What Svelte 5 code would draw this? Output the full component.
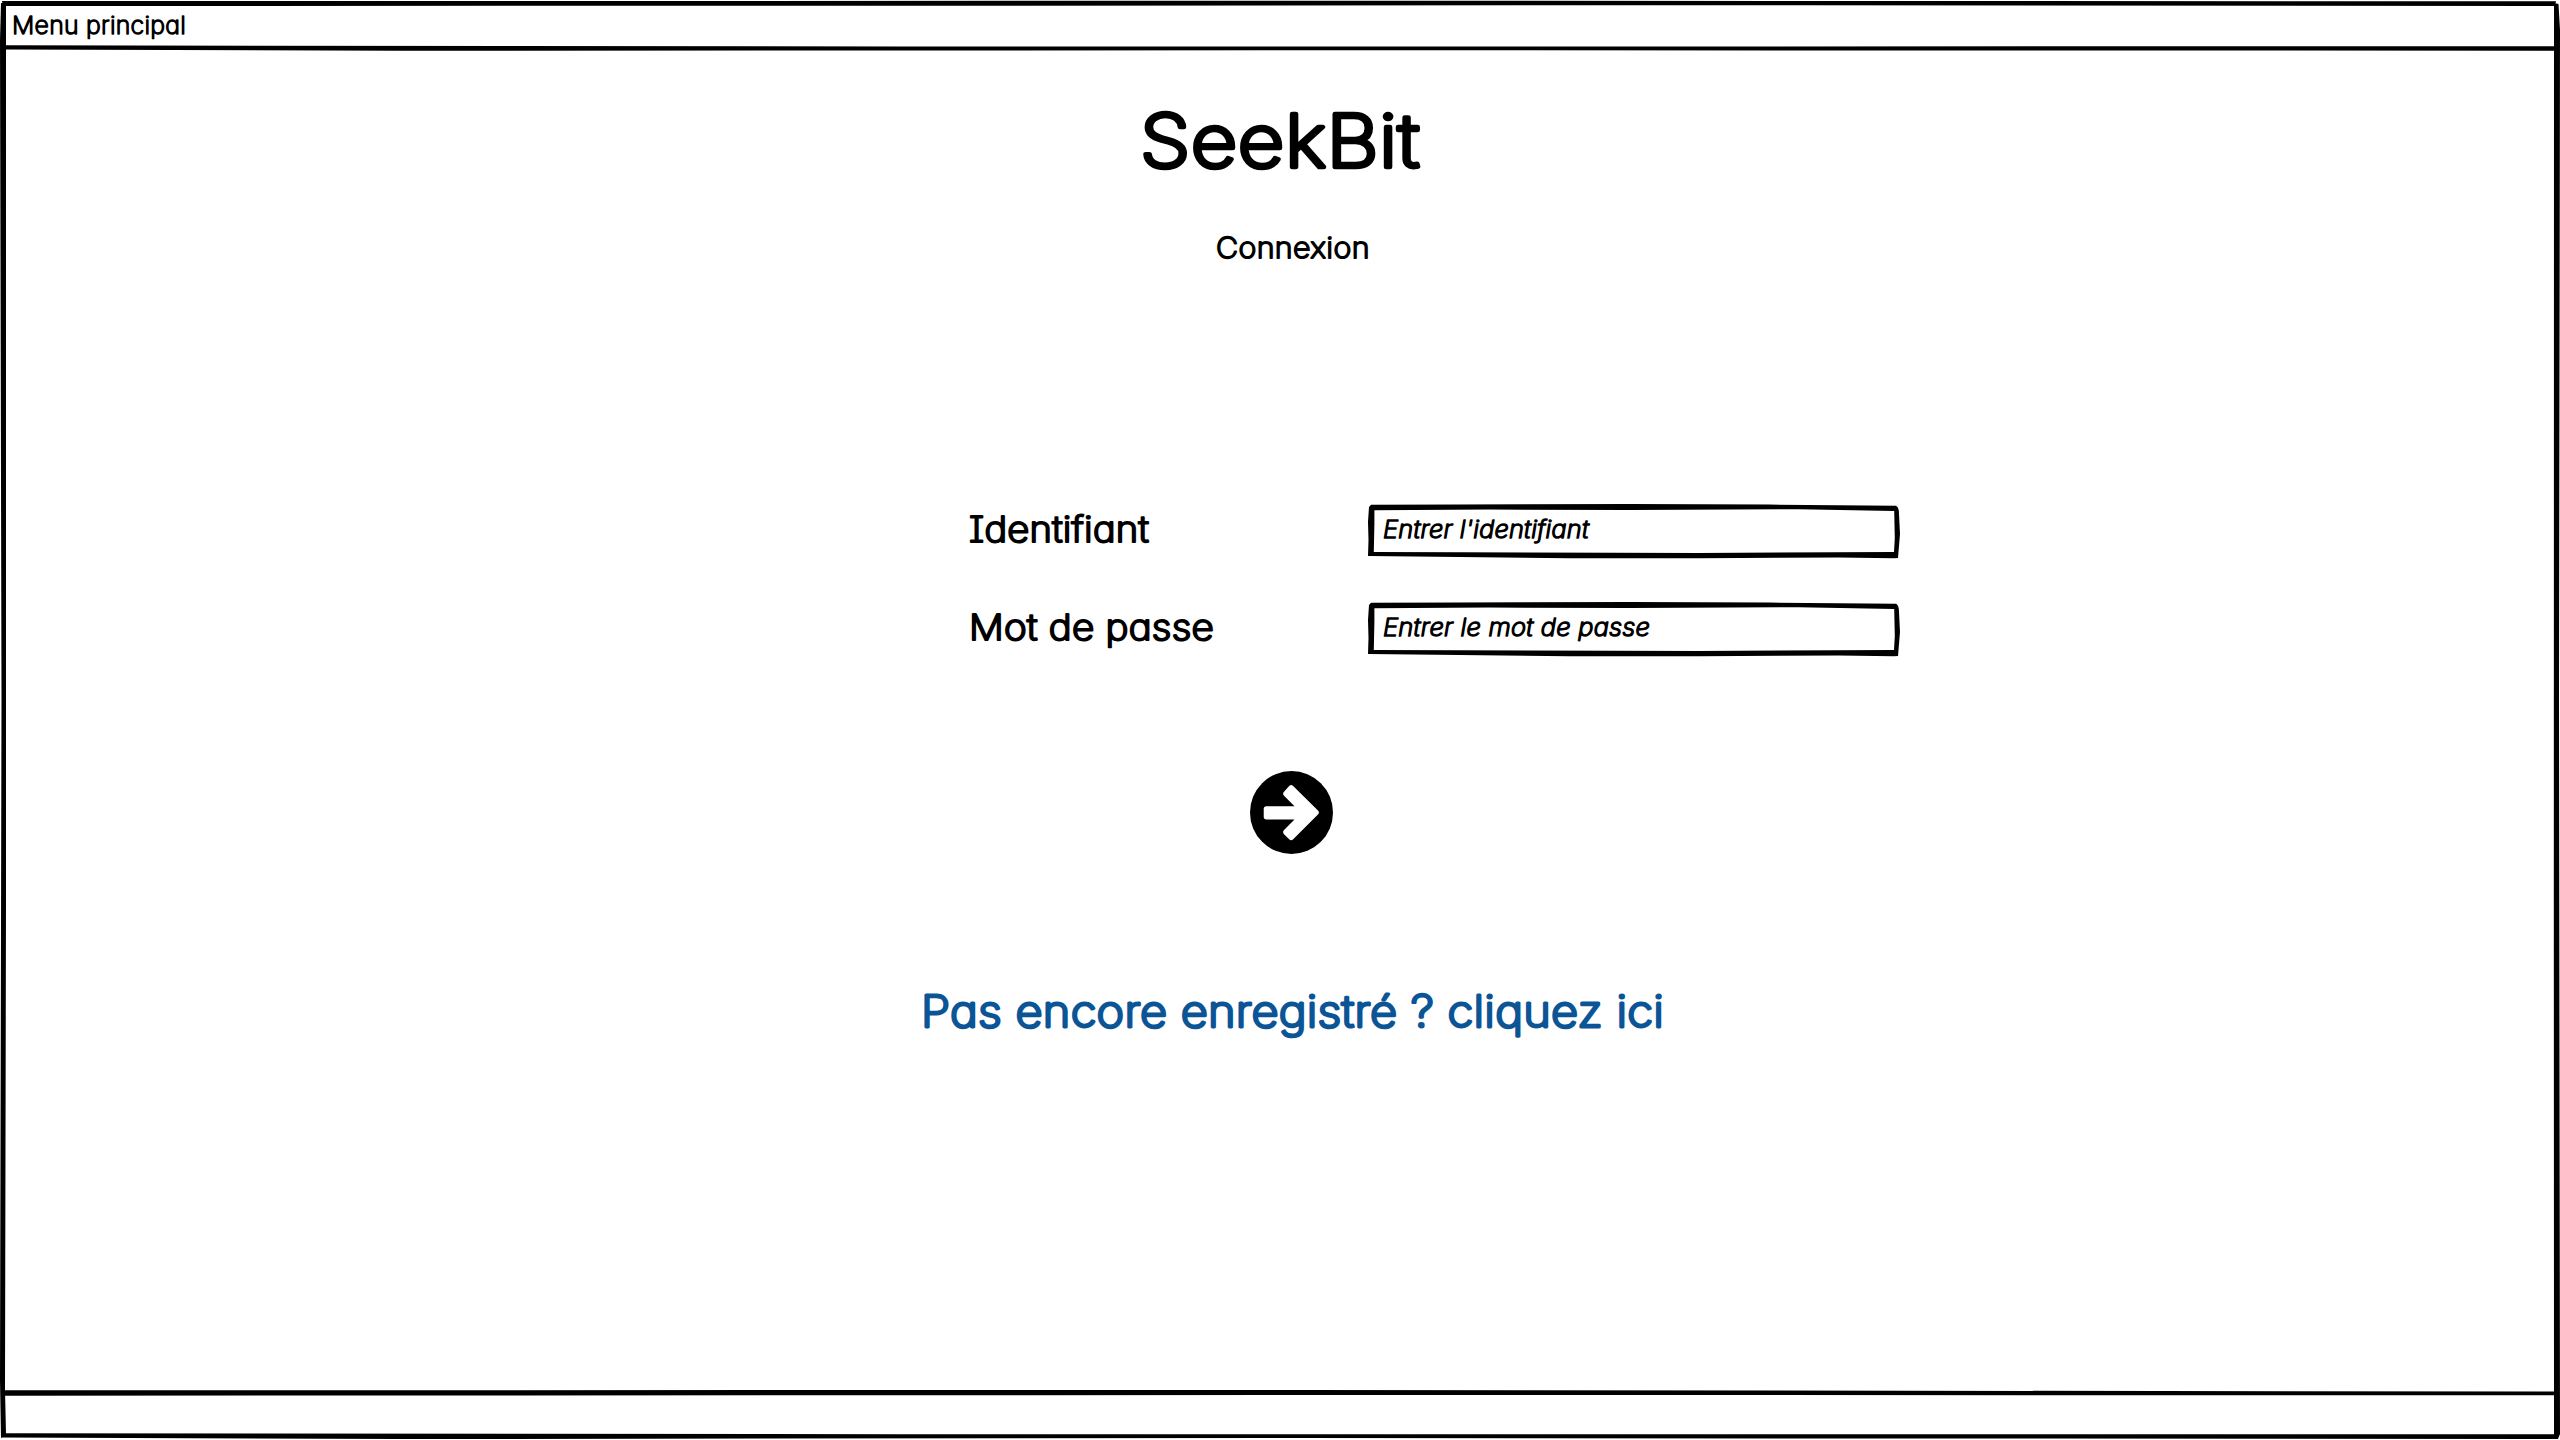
<script>
  const texts = {
    menu: { t: 'Menu principal', s: 24, w: 174, k: 1.4 },
    title: { t: 'SeekBit', s: 73, w: 280, k: 4.5 },
    sub: { t: 'Connexion', s: 29, w: 154, k: 1.8 },
    user: { t: 'Identifiant', s: 35.3, w: 180, k: 2.2 },
    pass: { t: 'Mot de passe', s: 35.3, w: 245, k: 2.2 },
    userHint: { t: "Entrer l'identifiant", s: 24, w: 206, k: 1.5, italic: true },
    passHint: { t: 'Entrer le mot de passe', s: 24, w: 267, k: 1.5, italic: true },
    link: { t: 'Pas encore enregistré ? cliquez ici', s: 44, w: 743, k: 2.9 }
  };
</script>

{#snippet word(d)}
  <svg class="word" class:italic={d.italic} width={d.w} height={d.s}>
    <text x="0" y={d.s * 0.8} font-size={d.s} stroke-width={d.k} textLength={d.w} lengthAdjust="spacingAndGlyphs">{d.t}</text>
  </svg>
{/snippet}

{#snippet field(d)}
  <div class="field">
    <svg class="outline" viewBox="0 0 531 55" aria-hidden="true">
      <path fill-rule="evenodd" d="M2 .7 L90 .5 L260 0 L400 .6 L527 1.7 Q530 3 530 10 L531 30 L529 54 L525 54.3 L470 53.5 L330 54.3 L200 54.3 L90 53 L-1 52 L-.5 36 L-1 18 L0 3 Z M5.4 6.2 L5.4 20 L4.8 48 L90 48.3 L330 49 L525 48 L525.8 34 L525.2 6.9 L430 5.2 L260 6 L120 5.5 Z" />
    </svg>
    {@render word(d)}
  </div>
{/snippet}

<div class="screen">
  <svg class="frame" viewBox="0 0 2560 1440" aria-hidden="true">
    <path d="M2 1 L1400 .8 L2556 1.3 L2555 6 L1800 5.2 L900 5.7 L3 6 Z" />
    <path d="M1 3 L6 3 L6 900 L5 1390 L6 1434 L1 1438 L0 1380 L1.5 700 L0 40 Z" />
    <path d="M2554 3 L2558.5 4 L2560 30 L2559 700 L2560 1434 L2558 1439 L2554 1437 L2553.8 900 Z" />
    <path d="M5 45.3 L900 46.5 L2555 46.3 L2555 50.7 L1300 50.3 L400 50.8 L5 49.6 Z" />
    <path d="M5 1390.3 L1300 1390 L2555 1391.5 L2555 1395.3 L1300 1395 L5 1395.7 Z" />
    <path d="M1 1433.2 L900 1434.2 L2558 1434.3 L2558 1439 L1300 1438 L400 1439 L1 1437.6 Z" />
  </svg>
  <header>{@render word(texts.menu)}</header>
  <main>
    <h1>{@render word(texts.title)}</h1>
    <h2>{@render word(texts.sub)}</h2>
    <form>
      <div class="row">
        <div class="label">{@render word(texts.user)}</div>
        {@render field(texts.userHint)}
      </div>
      <div class="row">
        <div class="label">{@render word(texts.pass)}</div>
        {@render field(texts.passHint)}
      </div>
    </form>
    <button type="button" aria-label="Connexion">
      <svg viewBox="0 0 248 248">
        <circle cx="124" cy="124" r="124" />
        <path class="arrow" d="M49 105 H133 L101 73 Q97 68 101 63 L117 45 Q123 38 129 45 L203 118 Q209 124 203 130 L129 204 Q123 210 117 204 L101 188 Q97 182 101 177 L133 145 H49 Q41 145 41 137 V113 Q41 105 49 105 Z" />
      </svg>
    </button>
    <div class="link">{@render word(texts.link)}</div>
  </main>
</div>

<style>
  :global(body) { background: #fff; }
  .screen { position: relative; width: 2560px; height: 1440px; overflow: hidden; background: #fff; }
  .frame { position: absolute; inset: 0; width: 100%; height: 100%; }
  .word {
    display: block;
    overflow: visible;
    font-family: Inter, 'Liberation Sans', sans-serif;
    font-weight: 200;
    font-feature-settings: 'cv11', 'cv08';
    letter-spacing: 0.015em;
    fill: currentColor;
    stroke: currentColor;
    stroke-linejoin: round;
    stroke-linecap: round;
  }
  .italic { font-style: italic; }
  header { height: 48px; box-sizing: border-box; padding: 14.5px 0 0 12px; }
  h1, h2 { margin: 0; font-weight: 200; }
  h1 { padding: 60.5px 0 0 1140px; }
  h2 { padding: 53.5px 0 0 1216px; }
  form { margin: 240px 0 0 969px; display: flex; flex-direction: column; gap: 43px; }
  .row { display: flex; height: 55px; }
  .label { width: 400px; box-sizing: border-box; padding-top: 10px; }
  .field { position: relative; width: 531px; height: 55px; box-sizing: border-box; padding: 14.5px 0 0 14px; }
  .outline { position: absolute; inset: 0; width: 531px; height: 55px; overflow: visible; }
  button { display: block; width: 83px; height: 83px; margin: 114px 0 0 1250px; padding: 0; border: 0; background: none; }
  button svg { display: block; width: 83px; height: 83px; }
  .arrow { fill: #fff; }
  .link { color: #0b5597; padding: 137.5px 0 0 921px; }
</style>
